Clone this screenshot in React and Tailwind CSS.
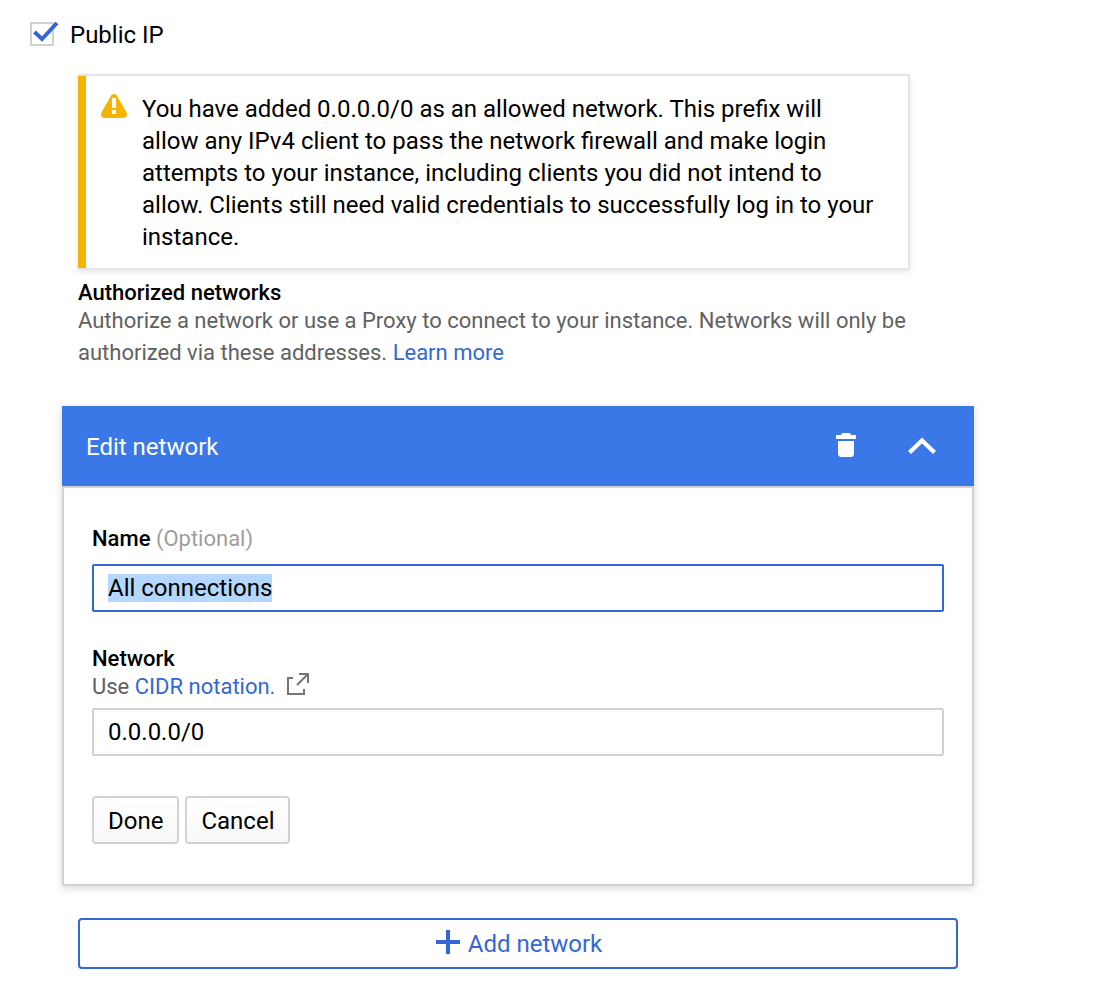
import { useEffect, useRef, useState } from 'react'

function WarningIcon() {
  return (
    <svg className="block h-6 w-[26px]" viewBox="0 0 26 24" aria-hidden="true">
      <path
        d="M9.700 2.200C10.400.7 11.600 0 13 0s2.600.7 3.300 2.200l9.100 16.100c1.300 2.700 0 5.700-3.200 5.700H3.800C.6 24-.7 21 .6 18.300Z"
        fill="#f4b400"
      />
      <path d="M11 4h4v10h-4zM11 16h4v4h-4z" fill="#fff" />
    </svg>
  )
}

function TrashIcon() {
  return (
    <svg className="block h-6 w-5" viewBox="0 0 20 24" fill="#fff" aria-hidden="true">
      <path d="M0 2h5c.3-1.300 1-2 2-2h6c1 0 1.700.7 2 2h5v4H0zM2 8h16v12.500a3.500 3.500 0 0 1-3.500 3.500h-9A3.500 3.500 0 0 1 2 20.500z" />
    </svg>
  )
}

function ChevronUpIcon() {
  return (
    <svg className="block h-[18px] w-7" viewBox="0 0 28 18" fill="none" aria-hidden="true">
      <path d="M1.500 15.500 14 3.500l12.500 12" stroke="#fff" strokeWidth="4.200" />
    </svg>
  )
}

function ExternalIcon() {
  return (
    <svg
      className="block h-[22px] w-[22px]"
      viewBox="0 0 22 22"
      fill="none"
      stroke="#757575"
      strokeWidth="2"
      aria-hidden="true"
    >
      <path d="M6 5H1v16h16v-5M12 1h9v9M21 1 10 12" />
    </svg>
  )
}

function PlusIcon() {
  return (
    <svg className="block h-6 w-6" viewBox="0 0 24 24" fill="#3367d6" aria-hidden="true">
      <path d="M10 0h4v10h10v4H14v10h-4V14H0v-4h10z" />
    </svg>
  )
}

function PublicIpCheckbox() {
  const [checked, setChecked] = useState(true)
  return (
    <label className="flex items-center gap-4">
      <span className="relative block h-6 w-6">
        <input
          type="checkbox"
          checked={checked}
          onChange={(e) => setChecked(e.target.checked)}
          className="block h-6 w-6 appearance-none border-2 border-[#d2d2d2] bg-white"
        />
        {checked && (
          <svg
            className="pointer-events-none absolute top-0 left-0 h-6 w-7 overflow-visible"
            viewBox="0 0 28 24"
            fill="none"
            aria-hidden="true"
          >
            <path d="m4.500 10 7.500 7L27 1" stroke="#3367d6" strokeWidth="4" />
          </svg>
        )}
      </span>
      <span className="pt-0.5 leading-[26px]">Public IP</span>
    </label>
  )
}

const fieldClass =
  'block h-12 w-full rounded-xs border-2 border-[#d2d2d2] bg-white px-3.5 text-2xl outline-none selection:bg-[#b3d7ff] selection:text-black focus:border-[#3367d6]'
const buttonClass =
  'h-12 rounded-sm border-2 border-[#d2d2d2] bg-linear-to-b from-white to-[#f8f8f8] px-3.5 pt-0.5'

export default function App() {
  const nameRef = useRef(null)
  const [name, setName] = useState('All connections')
  const [network, setNetwork] = useState('0.0.0.0/0')

  useEffect(() => {
    nameRef.current.focus()
    nameRef.current.select()
  }, [])

  return (
    <main className="bg-white px-[30px] pt-5 pb-4 font-[Roboto,sans-serif] text-2xl text-black">
      <PublicIpCheckbox />

      <div className="ml-8 max-w-[912px]">
        <section className="mx-4">
          <div
            role="alert"
            className="mt-[26px] flex max-w-[832px] border-y-2 border-r-2 border-[#e5e5e5] bg-white shadow-[0_2px_6px_rgba(0,0,0,0.1)]"
          >
            <div className="w-2 shrink-0 bg-[#f4b400]" />
            <div className="flex gap-[15px] pt-[17px] pr-8 pb-[15px] pl-[15px]">
              <div className="shrink-0 pt-px">
                <WarningIcon />
              </div>
              <p className="leading-8">
                You have added 0.0.0.0/0 as an allowed network. This prefix will allow any IPv4
                client to pass the network firewall and make login attempts to your instance,
                including clients you did not intend to allow. Clients still need valid credentials
                to successfully log in to your instance.
              </p>
            </div>
          </div>

          <h2 className="mt-[11px] text-[22px] leading-6 font-medium">Authorized networks</h2>
          <p className="max-w-[832px] text-[22px] leading-8 text-[#616161]">
            Authorize a network or use a Proxy to connect to your instance. Networks will only be
            authorized via these addresses.{' '}
            <a href="#learn-more" className="text-[#3367d6]">
              Learn more
            </a>
          </p>
        </section>

        <section className="mt-[37px] shadow-[0_2px_8px_rgba(0,0,0,0.16)]">
          <header className="flex h-20 items-center bg-[#3b78e7] pr-[38px] pl-6 text-white">
            <h2 className="grow pt-0.5">Edit network</h2>
            <button type="button" aria-label="Delete network" className="mr-[52px] pb-0.5">
              <TrashIcon />
            </button>
            <button type="button" aria-label="Collapse">
              <ChevronUpIcon />
            </button>
          </header>

          <form
            className="border-2 border-[#d2d2d2] bg-white px-7 pt-[35px] pb-10"
            onSubmit={(e) => e.preventDefault()}
          >
            <label htmlFor="network-name" className="block text-[22px] leading-8">
              <span className="font-medium">Name</span>{' '}
              <span className="text-[#9e9e9e]">(Optional)</span>
            </label>
            <input
              id="network-name"
              ref={nameRef}
              type="text"
              value={name}
              onChange={(e) => setName(e.target.value)}
              className={`mt-[9px] ${fieldClass}`}
            />

            <label
              htmlFor="network-range"
              className="mt-[33px] block text-[22px] leading-7 font-medium"
            >
              Network
            </label>
            <p className="flex items-start text-[22px] leading-7 text-[#616161]">
              <span>
                Use{' '}
                <a href="#cidr" className="text-[#3367d6]">
                  CIDR notation.
                </a>
              </span>
              <span className="ml-3">
                <ExternalIcon />
              </span>
            </p>
            <input
              id="network-range"
              type="text"
              value={network}
              onChange={(e) => setNetwork(e.target.value)}
              className={`mt-[7px] ${fieldClass}`}
            />

            <div className="mt-10 flex gap-1.5">
              <button type="submit" className={buttonClass}>
                Done
              </button>
              <button type="button" className={buttonClass}>
                Cancel
              </button>
            </div>
          </form>
        </section>

        <div className="mx-4 mt-8">
          <button
            type="button"
            className="flex h-[51px] w-full items-center justify-center gap-2 rounded-sm border-2 border-[#3367d6] bg-white pl-0.5 text-[#3367d6]"
          >
            <span className="pb-[3px]">
              <PlusIcon />
            </span>
            Add network
          </button>
        </div>
      </div>
    </main>
  )
}
